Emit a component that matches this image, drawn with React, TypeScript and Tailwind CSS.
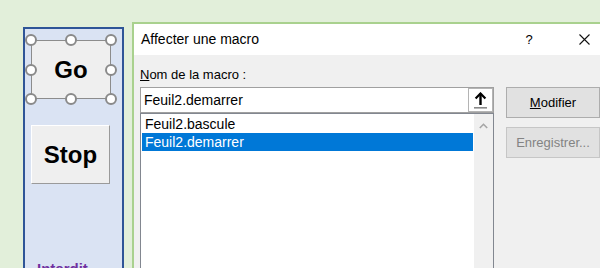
import React from 'react';

const Handle: React.FC<{ className: string }> = ({ className }) => (
  <span
    className={`absolute w-[12px] h-[12px] rounded-full bg-white border-2 border-[#8a8a8a] ${className}`}
  />
);

const SheetPanel: React.FC = () => (
  <div className="ml-[23px] mt-[27px] w-[101px] h-[260px] shrink-0 border-2 border-[#2f5597] bg-[#dae3f3] flex flex-col pl-[6px]">
    {/* Go button, selected with sizing handles */}
    <div className="relative mt-[11px] w-[80px] h-[59px] bg-[#efefef] border border-[#8c8c8c] flex items-center justify-center">
      <span className="text-[24px] font-bold text-black leading-none">Go</span>
      <Handle className="-left-[7px] -top-[7px]" />
      <Handle className="left-[33px] -top-[7px]" />
      <Handle className="-right-[7px] -top-[7px]" />
      <Handle className="-left-[7px] top-[23px]" />
      <Handle className="-right-[7px] top-[23px]" />
      <Handle className="-left-[7px] -bottom-[7px]" />
      <Handle className="left-[33px] -bottom-[7px]" />
      <Handle className="-right-[7px] -bottom-[7px]" />
    </div>

    <div className="mt-[26px] w-[79px] h-[59px] bg-[#efefef] border border-t-white border-l-white border-r-[#9a9a9a] border-b-[#9a9a9a] flex items-center justify-center">
      <span className="text-[24px] font-bold text-black leading-none">Stop</span>
    </div>

    <div className="mt-[77px] pl-[6px] text-[15px] font-bold text-[#7030a0] leading-none">Interdit</div>
  </div>
);

const MacroDialog: React.FC = () => (
  <div className="ml-[8px] mt-[22px] w-[468px] h-[260px] shrink-0 border-l-2 border-t-2 border-[#a9d18e] bg-[#f0f0f0] flex flex-col">
    {/* title bar */}
    <div className="h-[31px] bg-white flex items-center pl-[7px] pr-[6px]">
      <span className="flex-1 text-[14px] text-black">Affecter une macro</span>
      <span className="w-[20px] text-center text-[13px] text-black">?</span>
      <span className="ml-[35px] w-[20px] flex justify-center">
        <svg width="11" height="11" viewBox="0 0 11 11">
          <path d="M0.5 0.5 L10.5 10.5 M10.5 0.5 L0.5 10.5" stroke="#111" strokeWidth="1.1" />
        </svg>
      </span>
    </div>

    <div className="pl-[6px] flex flex-col">
      <div className="mt-[12px] leading-[16px] text-[13px] text-black">
        <span className="underline">N</span>om de la macro :
      </div>

      <div className="mt-[4px] flex">
        {/* name field + list */}
        <div className="w-[357px] flex flex-col">
          <div className="h-[26px] bg-white border border-[#a0a0a0] flex items-center">
            <span className="flex-1 pl-[3px] text-[14px] text-black">Feuil2.demarrer</span>
            <span className="w-[25px] h-full border border-[#b4b4b4] bg-white flex flex-col items-center justify-center">
              <svg width="13" height="17" viewBox="0 0 13 17">
                <path d="M6.5 1.5 L6.5 13" stroke="#000" strokeWidth="2.4" />
                <path d="M1.6 6.6 L6.5 1.5 L11.4 6.6" stroke="#000" strokeWidth="2.2" fill="none" />
                <rect x="0" y="15" width="13" height="1.6" fill="#8a8a8a" />
              </svg>
            </span>
          </div>

          <div className="h-[160px] bg-white border border-[#828790] flex">
            <div className="flex-1 flex flex-col pt-[1px] pl-[1px]">
              <div className="h-[18px] pl-[3px] flex items-center text-[14px] text-black">Feuil2.bascule</div>
              <div className="h-[18px] pl-[3px] flex items-center text-[14px] text-white bg-[#0078d7]">Feuil2.demarrer</div>
            </div>
            <div className="w-[19px] ml-[1px] bg-[#f0f0f0] flex justify-center pt-[9px]">
              <svg width="9" height="6" viewBox="0 0 9 6">
                <path d="M0.8 5 L4.5 1.3 L8.2 5" stroke="#a6a6a6" strokeWidth="1.6" fill="none" />
              </svg>
            </div>
          </div>
        </div>

        {/* buttons */}
        <div className="ml-[12px] w-[94px] shrink-0 flex flex-col gap-[9px]">
          <div className="h-[31px] bg-[#e1e1e1] border border-[#adadad] flex items-center justify-center text-[13px] text-black">
            <span><span className="underline">M</span>odifier</span>
          </div>
          <div className="h-[31px] bg-[#e1e1e1] border border-[#c6c6c6] flex items-center justify-center text-[13px] text-[#838383]">
            Enregistrer...
          </div>
        </div>
      </div>
    </div>
  </div>
);

export default function App() {
  return (
    <div
      className="w-[600px] h-[268px] overflow-hidden bg-[#e2efda] flex items-start"
      style={{ fontFamily: '"Liberation Sans", Arial, sans-serif' }}
    >
      <SheetPanel />
      <MacroDialog />
    </div>
  );
}
